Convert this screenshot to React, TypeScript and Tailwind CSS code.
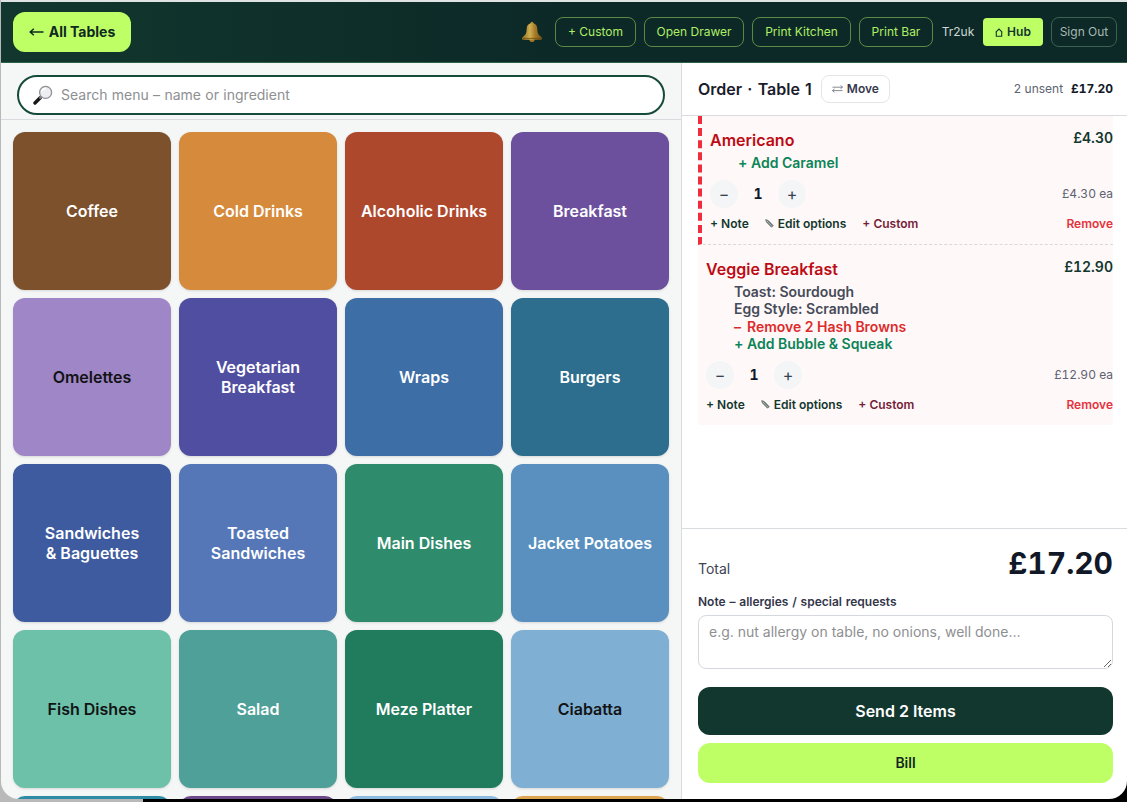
import clsx from "clsx";

type Category = { name: string; color: string; dark?: boolean };

type Modifier = { sign?: string; text: string; kind: "option" | "add" | "remove" };

type OrderLine = {
  name: string;
  price: string;
  qty: number;
  modifiers: Modifier[];
  active?: boolean;
};

const categories: Category[] = [
  { name: "Coffee", color: "bg-[#7c512c]" },
  { name: "Cold Drinks", color: "bg-[#d68a3c]" },
  { name: "Alcoholic Drinks", color: "bg-[#ae482d]" },
  { name: "Breakfast", color: "bg-[#6d509d]" },
  { name: "Omelettes", color: "bg-[#9f86c6]", dark: true },
  { name: "Vegetarian Breakfast", color: "bg-[#504ea0]" },
  { name: "Wraps", color: "bg-[#3e6ea6]" },
  { name: "Burgers", color: "bg-[#2d6e8e]" },
  { name: "Sandwiches &\u00a0Baguettes", color: "bg-[#3e5b9f]" },
  { name: "Toasted Sandwiches", color: "bg-[#5577b7]" },
  { name: "Main Dishes", color: "bg-[#2e8b6b]" },
  { name: "Jacket Potatoes", color: "bg-[#5990bf]" },
  { name: "Fish Dishes", color: "bg-[#6cc1a8]", dark: true },
  { name: "Salad", color: "bg-[#4fa098]" },
  { name: "Meze Platter", color: "bg-[#217b5d]" },
  { name: "Ciabatta", color: "bg-[#7fafd2]", dark: true },
  { name: "", color: "bg-[#2e8ba6]" },
  { name: "", color: "bg-[#6b4a8a]" },
  { name: "", color: "bg-[#8bbbe0]" },
  { name: "", color: "bg-[#dda552]" },
];

const order: OrderLine[] = [
  {
    name: "Americano",
    price: "£4.30",
    qty: 1,
    active: true,
    modifiers: [{ sign: "+", text: "Add Caramel", kind: "add" }],
  },
  {
    name: "Veggie Breakfast",
    price: "£12.90",
    qty: 1,
    modifiers: [
      { text: "Toast: Sourdough", kind: "option" },
      { text: "Egg Style: Scrambled", kind: "option" },
      { sign: "–", text: "Remove 2 Hash Browns", kind: "remove" },
      { sign: "+", text: "Add Bubble & Squeak", kind: "add" },
    ],
  },
];

const modifierColor = {
  option: "text-[#454b59]",
  add: "text-[#0b8457]",
  remove: "text-[#dc2b2b]",
};

function BackArrow() {
  return (
    <svg width="15" height="8" viewBox="0 0 15 8" fill="none" stroke="currentColor" strokeWidth="1.5">
      <path d="M1.200 4H14.500M4.800.8L1.200 4l3.600 3.200" />
    </svg>
  );
}

function BellIcon() {
  return (
    <svg width="22" height="22" viewBox="0 0 22 22">
      <defs>
        <linearGradient id="bell" x1="0" x2="1">
          <stop offset="0" stopColor="#8f6a1e" />
          <stop offset="0.4" stopColor="#d0b052" />
          <stop offset="0.65" stopColor="#a67b25" />
          <stop offset="1" stopColor="#755417" />
        </linearGradient>
      </defs>
      <ellipse cx="11" cy="19.3" rx="2.6" ry="1.8" fill="#a87b22" />
      <circle cx="11" cy="2.2" r="1.5" fill="#b08a32" />
      <path
        d="M11 2.2c3.6 0 5.1 2.2 5.3 5.6.2 4 .7 5.900 4 8.200 1.200 1.200.8 2.600-.4 2.800H2.100C.9 18.600.5 17.200 1.700 16c3.300-2.300 3.800-4.200 4-8.200.2-3.400 1.700-5.600 5.300-5.600z"
        fill="url(#bell)"
      />
      <path d="M2 17.400h18" stroke="#6d4e14" strokeWidth="0.8" />
    </svg>
  );
}

function SearchIcon() {
  return (
    <svg width="20" height="20" viewBox="0 0 20 20">
      <path d="M2 18l5.200-5.200" stroke="#171717" strokeWidth="3.400" strokeLinecap="round" />
      <path d="M6.500 13.500l2-2" stroke="#8a8a8a" strokeWidth="1.800" />
      <circle cx="12.600" cy="7.400" r="6" fill="#eceef2" stroke="#8f8f94" strokeWidth="1.300" />
      <path d="M9 6.500a4 4 0 0 1 4-3" stroke="#fff" strokeWidth="1.500" fill="none" />
    </svg>
  );
}

function HomeIcon() {
  return (
    <svg width="8" height="9" viewBox="0 0 8 9" fill="none" stroke="currentColor" strokeWidth="1.1">
      <path d="M.6 4.400L4 1l3.400 3.400M1.300 4v4.200h5.400V4" />
    </svg>
  );
}

function SwapIcon() {
  return (
    <svg width="11" height="8" viewBox="0 0 11 8" fill="none" stroke="#6b6f7a" strokeWidth="0.8">
      <path d="M.5 2.200h10M8.500.4l2 1.800-2 1.600M10.500 5.600H.5M2.500 3.900l-2 1.700 2 1.800" />
    </svg>
  );
}

function PencilIcon() {
  return (
    <svg width="9" height="9" viewBox="0 0 9 9" fill="#c9cccb" stroke="#4b5a55" strokeWidth="0.8">
      <path d="M.7.7l2.400.7 5 5.200-1.600 1.600-5-5.100zM2 2.600l5 5M2.800 1.700l5 5" />
    </svg>
  );
}

function Header() {
  const outlined =
    "flex h-[30px] items-center justify-center rounded-lg border border-[#5b8a45] text-xs text-[#b0ee66]";

  return (
    <header className="flex h-[61px] shrink-0 items-center justify-between border-b border-[#2f6244] bg-linear-to-r from-[#12372e] to-[#0c2927] to-50% pr-[10px] pl-3">
      <button className="flex h-10 w-[118px] items-center justify-center gap-[5px] rounded-xl bg-[#bfff66] text-sm font-bold text-[#0f2a20]">
        <BackArrow />
        All Tables
      </button>
      <div className="flex items-center gap-2">
        <div className="mr-[4px]">
          <BellIcon />
        </div>
        <button className={clsx(outlined, "w-[81px]")}>+ Custom</button>
        <button className={clsx(outlined, "w-[100px]")}>Open Drawer</button>
        <button className={clsx(outlined, "w-[99px]")}>Print Kitchen</button>
        <button className={clsx(outlined, "w-[74px]")}>Print Bar</button>
        <span className="w-[34px] text-center text-xs whitespace-nowrap text-[#cdd8d5]">Tr2uk</span>
        <button className="flex h-7 w-[60px] items-center justify-center gap-1 rounded bg-[#bfff66] text-xs font-semibold text-[#12372e]">
          <HomeIcon />
          Hub
        </button>
        <button className="h-[30px] w-[66px] rounded-lg border border-[#3d6150] text-xs text-[#a9b8b4]">Sign Out</button>
      </div>
    </header>
  );
}

function Menu() {
  return (
    <section className="flex w-[681px] shrink-0 flex-col border-r border-[#d9dcdf] bg-[#f5f7f7]">
      <div className="h-[57px] shrink-0 border-b border-[#d9dcdf] px-4 pt-3">
        <label className="flex h-10 items-center gap-2 rounded-full border-2 border-[#164a3b] bg-white pl-3.5">
          <SearchIcon />
          <input
            className="flex-1 bg-transparent text-sm [word-spacing:0.4px] outline-none placeholder:text-[#8e8f91]"
            placeholder="Search menu – name or ingredient"
          />
        </label>
      </div>
      <div className="grid min-h-0 flex-1 auto-rows-[158px] grid-cols-4 gap-2 overflow-hidden p-3">
        {categories.map((c, i) => (
          <button
            key={i}
            className={clsx(
              "rounded-xl px-3 text-base leading-5 font-semibold shadow-sm",
              c.color,
              c.dark ? "text-[#111315]" : "text-white"
            )}
          >
            <span className="mx-auto block max-w-[128px]">{c.name}</span>
          </button>
        ))}
      </div>
    </section>
  );
}

function QtyButton({ label }: { label: string }) {
  return (
    <button className="flex size-7 items-center justify-center rounded-full bg-[#f3f5f6] text-base text-[#374151]">
      {label}
    </button>
  );
}

function OrderItem({ line }: { line: OrderLine }) {
  return (
    <div
      className={clsx(
        "bg-[#fff8f8] py-3 pl-2",
        line.active && "border-b border-l-4 border-dashed border-b-[#d9d9dc] border-l-[#f02d3c]"
      )}
    >
      <div className="flex items-start justify-between">
        <h3 className="text-base font-semibold text-[#bd0b14]">{line.name}</h3>
        <span className="text-sm font-semibold text-[#12372e] tabular-nums">{line.price}</span>
      </div>
      <ul className="mt-0.5 pl-7 text-sm leading-[17.5px] font-semibold">
        {line.modifiers.map((m) => (
          <li key={m.text} className={modifierColor[m.kind]}>
            {m.sign && <span className="inline-block w-[13px]">{m.sign}</span>}
            {m.text}
          </li>
        ))}
      </ul>
      <div className="mt-2 flex items-center">
        <QtyButton label="−" />
        <span className="w-10 text-center text-sm font-bold text-[#111827] tabular-nums">{line.qty}</span>
        <QtyButton label="+" />
        <span className="ml-auto text-xs text-[#5d6270] tabular-nums">{line.price} ea</span>
      </div>
      <div className="mt-2 flex items-center gap-4 text-xs font-semibold text-[#12372e]">
        <button>+ Note</button>
        <button className="flex items-center gap-1">
          <PencilIcon />
          Edit options
        </button>
        <button className="text-[#761d38]">+ Custom</button>
        <button className="ml-auto text-[#e5333d]">Remove</button>
      </div>
    </div>
  );
}

function OrderPanel() {
  return (
    <section className="flex min-w-0 flex-1 flex-col bg-white">
      <div className="flex h-[53px] shrink-0 items-center border-b border-[#d9dcdf] pr-[14px] pl-4">
        <h2 className="text-base font-semibold [word-spacing:1.2px] text-[#1a1c2b]">Order · Table 1</h2>
        <button className="ml-[9px] flex h-7 w-[69px] items-center justify-center gap-1 rounded-lg border border-[#e3e5e8] text-xs font-semibold text-[#37394d]">
          <SwapIcon />
          Move
        </button>
        <span className="ml-auto text-xs text-[#5d6270]">2 unsent</span>
        <span className="ml-2 text-xs font-bold text-[#111827] tabular-nums">£17.20</span>
      </div>

      <div className="min-h-0 flex-1 pr-[14px] pl-4">
        {order.map((line) => (
          <OrderItem key={line.name} line={line} />
        ))}
      </div>

      <div className="flex h-[271px] shrink-0 flex-col border-t border-[#d9dcdf] pt-4 pr-[14px] pb-4 pl-4">
        <div className="flex items-baseline justify-between">
          <span className="text-sm text-[#3f4354]">Total</span>
          <span className="text-3xl font-bold text-[#111827] tabular-nums">£17.20</span>
        </div>
        <label className="mt-[13px] text-xs font-semibold [word-spacing:0.8px] text-[#33364a]">
          Note – allergies / special requests
        </label>
        <textarea
          className="mt-[5px] h-[54px] shrink-0 rounded-lg border border-[#d5d8dc] px-2.5 py-1.5 text-sm outline-none placeholder:text-[#8e8f91]"
          placeholder="e.g. nut allergy on table, no onions, well done…"
        />
        <button className="mt-auto h-12 shrink-0 rounded-xl bg-[#12372e] text-base font-semibold text-white">
          Send 2 Items
        </button>
        <button className="mt-2 h-10 shrink-0 rounded-xl bg-[#bfff66] text-sm font-semibold text-[#12291f]">Bill</button>
      </div>
    </section>
  );
}

export default function App() {
  return (
    <div className="h-[802px] w-[1127px] overflow-hidden bg-linear-to-r from-[#b9b9b9] from-[143px] to-black to-[143px] font-['Inter',sans-serif]">
      <div className="ml-px flex h-[799px] flex-col overflow-hidden rounded-b-[18px] border-t-2 border-[#dfe3e3]">
        <Header />
        <div className="flex min-h-0 flex-1">
          <Menu />
          <OrderPanel />
        </div>
      </div>
    </div>
  );
}
